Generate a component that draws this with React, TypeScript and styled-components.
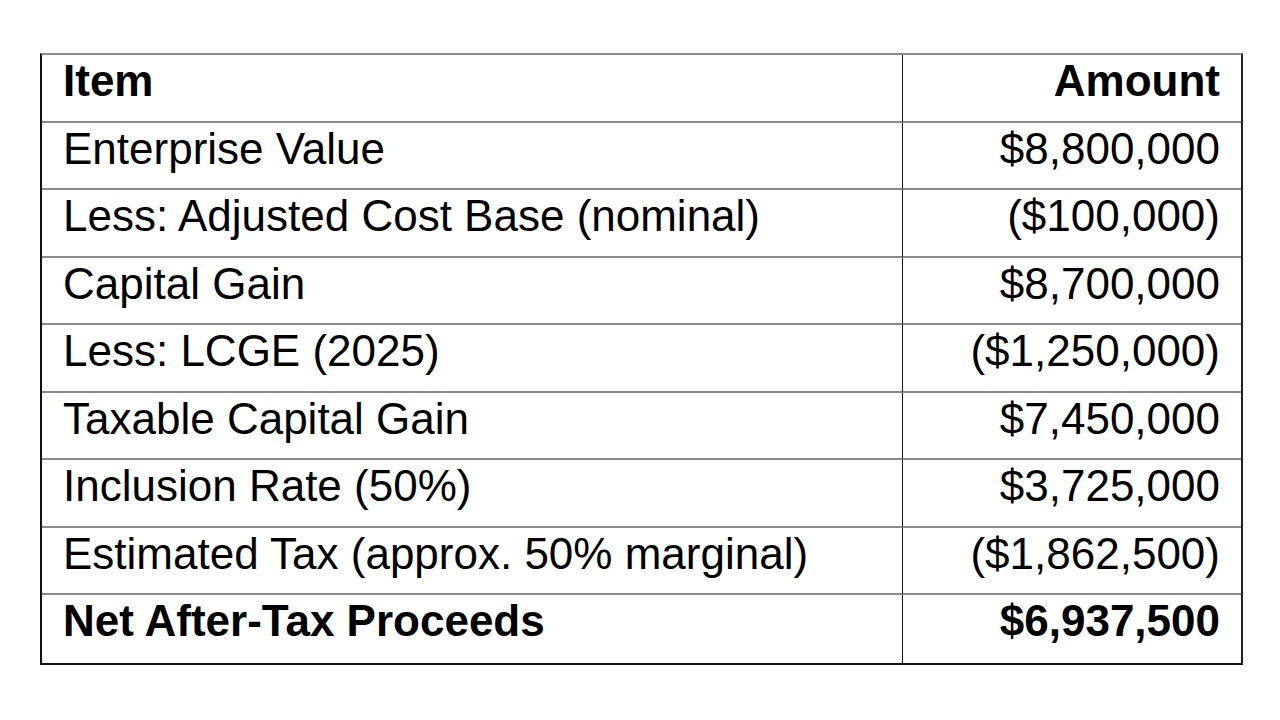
import styled, { createGlobalStyle } from "styled-components";

const GlobalStyle = createGlobalStyle`
  html, body {
    margin: 0;
    padding: 0;
    background: #ffffff;
  }
`;

const Page = styled.div`
  width: 1280px;
  height: 720px;
  padding: 53px 0 0 40px;
  box-sizing: border-box;
  background: #ffffff;
  font-family: "Liberation Sans", Arial, sans-serif;
  color: #000000;
`;

const Table = styled.div`
  width: 1203px;
  display: grid;
  grid-template-columns: 860px 1fr;
  border-top: 2px solid #8a8a8a;
  border-left: 2px solid #111111;
  border-right: 2px solid #222222;
  border-bottom: 2px solid #111111;
  box-sizing: border-box;
`;

const Cell = styled.div<{ $right?: boolean; $bold?: boolean; $last?: boolean }>`
  height: 67.5px;
  box-sizing: border-box;
  padding: 1px 21px 0 21px;
  display: flex;
  align-items: flex-start;
  justify-content: ${(p) => (p.$right ? "flex-end" : "flex-start")};
  font-size: 44px;
  line-height: 1.15;
  font-weight: ${(p) => (p.$bold ? 700 : 400)};
  white-space: nowrap;
  border-bottom: ${(p) => (p.$last ? "none" : "2px solid #8a8a8a")};
  border-left: ${(p) => (p.$right ? "1.5px solid #111111" : "none")};
`;

type Row = { item: string; amount: string; bold?: boolean };

const rows: Row[] = [
  { item: "Item", amount: "Amount", bold: true },
  { item: "Enterprise Value", amount: "$8,800,000" },
  { item: "Less: Adjusted Cost Base (nominal)", amount: "($100,000)" },
  { item: "Capital Gain", amount: "$8,700,000" },
  { item: "Less: LCGE (2025)", amount: "($1,250,000)" },
  { item: "Taxable Capital Gain", amount: "$7,450,000" },
  { item: "Inclusion Rate (50%)", amount: "$3,725,000" },
  { item: "Estimated Tax (approx. 50% marginal)", amount: "($1,862,500)" },
  { item: "Net After-Tax Proceeds", amount: "$6,937,500", bold: true },
];

export default function App() {
  return (
    <>
      <GlobalStyle />
      <Page>
        <Table>
          {rows.map((r, i) => {
            const last = i === rows.length - 1;
            return [
              <Cell key={`i${i}`} $bold={r.bold} $last={last}>
                {r.item}
              </Cell>,
              <Cell key={`a${i}`} $right $bold={r.bold} $last={last}>
                {r.amount}
              </Cell>,
            ];
          })}
        </Table>
      </Page>
    </>
  );
}
